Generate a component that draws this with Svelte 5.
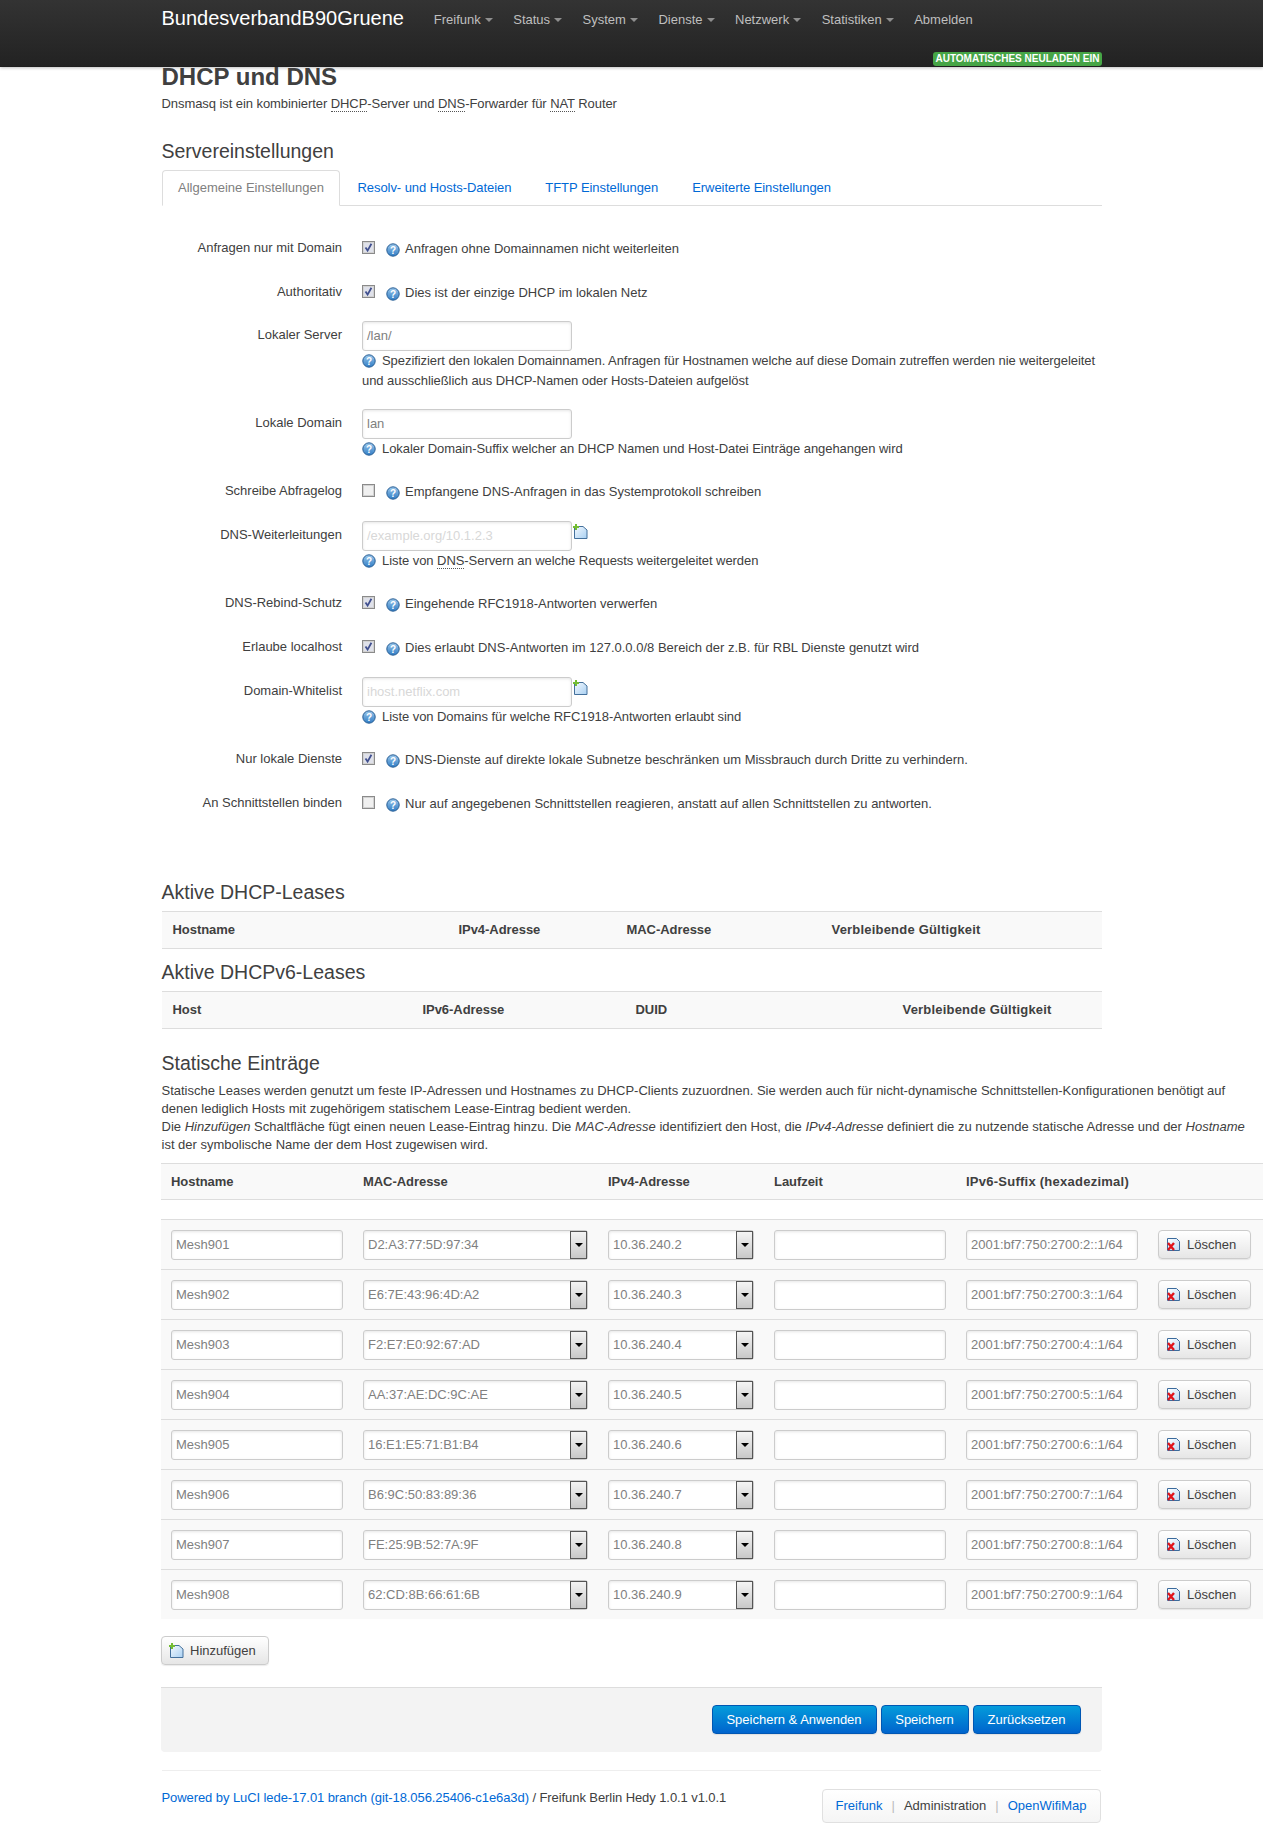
<script>
    const nav = ['Freifunk', 'Status', 'System', 'Dienste', 'Netzwerk', 'Statistiken'];
    const leases = [
        { mac: 'D2:A3:77:5D:97:34' },
        { mac: 'E6:7E:43:96:4D:A2' },
        { mac: 'F2:E7:E0:92:67:AD' },
        { mac: 'AA:37:AE:DC:9C:AE' },
        { mac: '16:E1:E5:71:B1:B4' },
        { mac: 'B6:9C:50:83:89:36' },
        { mac: 'FE:25:9B:52:7A:9F' },
        { mac: '62:CD:8B:66:61:6B' }
    ];
</script>

{#snippet help()}
    <svg class="help" width="14" height="14" viewBox="0 0 14 14">
        <defs>
            <linearGradient id="hg" x1="0" y1="0" x2="0" y2="1">
                <stop offset="0" stop-color="#9cc8ec" />
                <stop offset="1" stop-color="#2f7cc4" />
            </linearGradient>
        </defs>
        <circle cx="7" cy="7" r="6.2" fill="url(#hg)" stroke="#2a5f95" stroke-width="1" />
        <text x="7" y="10.5" text-anchor="middle" class="q">?</text>
    </svg>
{/snippet}

{#snippet check(on)}
    <svg class="check" width="13" height="13" viewBox="0 0 13 13">
        <rect x="0.5" y="0.5" width="12" height="12" fill={on ? '#dfe1ea' : '#f0f0f0'} stroke="#8a8a8a" />
        <rect x="1.5" y="1.5" width="10" height="10" fill="none" stroke="#d2d2d2" />
        {#if on}
            <path d="M3.5 6.5 L5.6 9.6 L9.4 2.8" fill="none" stroke="#41508f" stroke-width="1.8" />
        {/if}
    </svg>
{/snippet}

{#snippet addIcon()}
    <svg class="icon" width="15" height="15" viewBox="0 0 15 15">
        <defs>
            <linearGradient id="ag" x1="0" y1="0" x2="1" y2="1">
                <stop offset="0" stop-color="#f4f9fe" />
                <stop offset="1" stop-color="#a9d0f2" />
            </linearGradient>
        </defs>
        <path d="M1.5 2.5 H10 L14 6 V14.5 H1.5 Z" fill="url(#ag)" stroke="#44709c" />
        <path d="M3 0 V6 M0 3 H6" stroke="#74bd33" stroke-width="2" />
    </svg>
{/snippet}

{#snippet delIcon()}
    <svg class="icon" width="15" height="15" viewBox="0 0 15 15">
        <defs>
            <linearGradient id="dg" x1="0" y1="0" x2="1" y2="1">
                <stop offset="0" stop-color="#ffffff" />
                <stop offset="1" stop-color="#bcd9f4" />
            </linearGradient>
        </defs>
        <path d="M1.5 1.5 H10.5 L13.5 4.5 V13.5 H1.5 Z" fill="url(#dg)" stroke="#3a6a9c" />
        <path d="M2 6 L8 13 M8 6 L2 13" stroke="#e0141c" stroke-width="2.4" />
    </svg>
{/snippet}

<div class="page">
    <header class="navbar">
        <div class="bar-inner">
            <span class="brand">BundesverbandB90Gruene</span>
            <nav class="menu">
                {#each nav as item}
                    <span class="menu-item">{item}<i class="caret"></i></span>
                {/each}
                <span class="menu-item">Abmelden</span>
            </nav>
            <span class="badge">AUTOMATISCHES NEULADEN EIN</span>
        </div>
    </header>

    <main class="container">
        <h2 class="title">DHCP und DNS</h2>
        <p class="intro">Dnsmasq ist ein kombinierter <abbr>DHCP</abbr>-Server und <abbr>DNS</abbr>-Forwarder für <abbr>NAT</abbr> Router</p>

        <h3 class="server-head">Servereinstellungen</h3>
        <ul class="tabs">
            <li class="tab active">Allgemeine Einstellungen</li>
            <li class="tab">Resolv- und Hosts-Dateien</li>
            <li class="tab">TFTP Einstellungen</li>
            <li class="tab">Erweiterte Einstellungen</li>
        </ul>

        <section class="form">
            <div class="row first">
                <div class="lbl">Anfragen nur mit Domain</div>
                <div class="ctl">{@render check(true)}{@render help()}<span>Anfragen ohne Domainnamen nicht weiterleiten</span></div>
            </div>
            <div class="row first">
                <div class="lbl">Authoritativ</div>
                <div class="ctl">{@render check(true)}{@render help()}<span>Dies ist der einzige DHCP im lokalen Netz</span></div>
            </div>
            <div class="row tall">
                <div class="lbl">Lokaler Server</div>
                <div class="stack">
                    <div class="field wide">/lan/</div>
                    <div class="desc">{@render help()}Spezifiziert den lokalen Domainnamen. Anfragen für Hostnamen welche auf diese Domain zutreffen werden nie weitergeleitet und ausschließlich aus DHCP-Namen oder Hosts-Dateien aufgelöst</div>
                </div>
            </div>
            <div class="row tall">
                <div class="lbl">Lokale Domain</div>
                <div class="stack">
                    <div class="field wide">lan</div>
                    <div class="desc">{@render help()}Lokaler Domain-Suffix welcher an DHCP Namen und Host-Datei Einträge angehangen wird</div>
                </div>
            </div>
            <div class="row">
                <div class="lbl">Schreibe Abfragelog</div>
                <div class="ctl">{@render check(false)}{@render help()}<span>Empfangene DNS-Anfragen in das Systemprotokoll schreiben</span></div>
            </div>
            <div class="row tall">
                <div class="lbl">DNS-Weiterleitungen</div>
                <div class="stack">
                    <div class="with-add"><div class="field wide ph">/example.org/10.1.2.3</div>{@render addIcon()}</div>
                    <div class="desc">{@render help()}Liste von <abbr>DNS</abbr>-Servern an welche Requests weitergeleitet werden</div>
                </div>
            </div>
            <div class="row">
                <div class="lbl">DNS-Rebind-Schutz</div>
                <div class="ctl">{@render check(true)}{@render help()}<span>Eingehende RFC1918-Antworten verwerfen</span></div>
            </div>
            <div class="row">
                <div class="lbl">Erlaube localhost</div>
                <div class="ctl">{@render check(true)}{@render help()}<span>Dies erlaubt DNS-Antworten im 127.0.0.0/8 Bereich der z.B. für RBL Dienste genutzt wird</span></div>
            </div>
            <div class="row tall">
                <div class="lbl">Domain-Whitelist</div>
                <div class="stack">
                    <div class="with-add"><div class="field wide ph">ihost.netflix.com</div>{@render addIcon()}</div>
                    <div class="desc">{@render help()}Liste von Domains für welche RFC1918-Antworten erlaubt sind</div>
                </div>
            </div>
            <div class="row">
                <div class="lbl">Nur lokale Dienste</div>
                <div class="ctl">{@render check(true)}{@render help()}<span>DNS-Dienste auf direkte lokale Subnetze beschränken um Missbrauch durch Dritte zu verhindern.</span></div>
            </div>
            <div class="row">
                <div class="lbl">An Schnittstellen binden</div>
                <div class="ctl">{@render check(false)}{@render help()}<span>Nur auf angegebenen Schnittstellen reagieren, anstatt auf allen Schnittstellen zu antworten.</span></div>
            </div>
        </section>

        <h3 class="lease-head">Aktive DHCP-Leases</h3>
        <div class="thead v4">
            <span>Hostname</span><span>IPv4-Adresse</span><span>MAC-Adresse</span><span class="long">Verbleibende Gültigkeit</span>
        </div>
        <h3 class="lease6-head">Aktive DHCPv6-Leases</h3>
        <div class="thead v6">
            <span>Host</span><span>IPv6-Adresse</span><span>DUID</span><span class="long">Verbleibende Gültigkeit</span>
        </div>

        <h3 class="static-head">Statische Einträge</h3>
        <p class="static-text">Statische Leases werden genutzt um feste IP-Adressen und Hostnames zu DHCP-Clients zuzuordnen. Sie werden auch für nicht-dynamische Schnittstellen-Konfigurationen benötigt auf denen lediglich Hosts mit zugehörigem statischem Lease-Eintrag bedient werden.<br />Die <em>Hinzufügen</em> Schaltfläche fügt einen neuen Lease-Eintrag hinzu. Die <em>MAC-Adresse</em> identifiziert den Host, die <em>IPv4-Adresse</em> definiert die zu nutzende statische Adresse und der <em>Hostname</em> ist der symbolische Name der dem Host zugewisen wird.</p>

        <table class="static">
            <colgroup>
                <col style="width:192px" /><col style="width:245px" /><col style="width:166px" /><col style="width:192px" /><col style="width:192px" /><col style="width:115px" />
            </colgroup>
            <thead>
                <tr>
                    <th>Hostname</th><th>MAC-Adresse</th><th>IPv4-Adresse</th><th>Laufzeit</th><th colspan="2" class="long">IPv6-Suffix (hexadezimal)</th>
                </tr>
            </thead>
            <tbody>
                <tr class="spacer"><td colspan="6"></td></tr>
                {#each leases as lease, i}
                    <tr class="entry">
                        <td><div class="field">Mesh90{i + 1}</div></td>
                        <td><div class="combo"><span>{lease.mac}</span><i class="drop"><b></b></i></div></td>
                        <td><div class="combo"><span>10.36.240.{i + 2}</span><i class="drop"><b></b></i></div></td>
                        <td><div class="field"></div></td>
                        <td><div class="field">2001:bf7:750:2700:{i + 2}::1/64</div></td>
                        <td><button class="btn del">{@render delIcon()}Löschen</button></td>
                    </tr>
                {/each}
            </tbody>
        </table>

        <button class="btn add">{@render addIcon()}Hinzufügen</button>

        <div class="actions">
            <button class="btn primary apply">Speichern &amp; Anwenden</button>
            <button class="btn primary save">Speichern</button>
            <button class="btn primary reset">Zurücksetzen</button>
        </div>

        <footer class="foot">
            <p class="powered"><a href="#top">Powered by LuCI lede-17.01 branch (git-18.056.25406-c1e6a3d)</a> / Freifunk Berlin Hedy 1.0.1 v1.0.1</p>
            <div class="links">
                <a href="#top">Freifunk</a><i>|</i><span>Administration</span><i>|</i><a href="#top">OpenWifiMap</a>
            </div>
        </footer>
    </main>
</div>

<style>
    :global(body) {
        margin: 0;
        background: #fff;
    }

    .page {
        width: 1263px;
        height: 1832px;
        overflow: hidden;
        font-family: "Liberation Sans", Arial, sans-serif;
        font-size: 13px;
        line-height: 18px;
        color: #404040;
    }

    .navbar {
        height: 67px;
        background: linear-gradient(#333333, #222222);
        box-shadow: 0 1px 3px rgba(0, 0, 0, 0.25), 0 -1px 0 rgba(0, 0, 0, 0.1) inset;
    }

    .bar-inner {
        position: relative;
        width: 940px;
        margin-left: 161.5px;
        display: flex;
        align-items: flex-start;
    }

    .brand {
        font-size: 20px;
        line-height: 36px;
        color: #fff;
        width: 262px;
        flex: none;
    }

    .menu {
        display: flex;
    }

    .menu-item {
        color: #bfbfbf;
        line-height: 39px;
        padding: 0 10.25px;
        white-space: nowrap;
    }

    .caret {
        display: inline-block;
        margin-left: 4px;
        vertical-align: 2px;
        border-top: 4px solid #8f8f8f;
        border-left: 4px solid transparent;
        border-right: 4px solid transparent;
    }

    .badge {
        position: absolute;
        top: 52px;
        right: -0.5px;
        height: 14px;
        width: 169px;
        background: #46a546;
        border-radius: 3px;
        color: #fff;
        font-size: 10px;
        font-weight: bold;
        line-height: 14px;
        text-align: center;
        white-space: nowrap;
    }

    .container {
        width: 940px;
        margin-left: 161.5px;
    }

    .title {
        margin: 0;
        font-size: 24px;
        line-height: 20px;
        font-weight: bold;
        color: #404040;
    }

    .intro {
        margin: 8px 0 0;
        line-height: 18px;
        letter-spacing: -0.07px;
    }

    abbr {
        border-bottom: 1px dotted #555;
    }

    h3 {
        margin: 0;
        font-size: 19.5px;
        font-weight: normal;
        line-height: 24px;
        color: #404040;
    }

    .server-head {
        margin-top: 26px;
    }

    .tabs {
        list-style: none;
        margin: 7px 0 0;
        padding: 0;
        display: flex;
        height: 35px;
        border-bottom: 1px solid #ddd;
    }

    .tab {
        color: #0069d6;
        padding: 0 17px;
        line-height: 35px;
        white-space: nowrap;
        letter-spacing: -0.06px;
    }

    .tab.active {
        color: #808080;
        background: #fff;
        border: 1px solid #ddd;
        border-bottom: 1px solid #fff;
        border-radius: 4px 4px 0 0;
        line-height: 34px;
        padding: 0 15.5px;
        box-sizing: border-box;
        height: 36px;
        letter-spacing: 0;
    }

    .form {
        padding-top: 28px;
    }

    .row {
        display: flex;
        height: 26px;
        margin-bottom: 18px;
    }

    .row.first {
        height: 25.5px;
    }

    .row.tall {
        height: auto;
    }

    .lbl {
        width: 180.5px;
        flex: none;
        text-align: right;
        line-height: 28px;
        white-space: nowrap;
    }

    .ctl {
        margin-left: 20px;
        display: flex;
        align-items: flex-start;
        line-height: 30px;
        white-space: nowrap;
    }

    .check {
        margin-top: 7px;
        margin-right: 11px;
        flex: none;
    }

    .ctl .help {
        margin: 9px 5px 0 0;
        flex: none;
    }

    .help {
        display: inline-block;
    }

    .q {
        font-size: 10px;
        font-weight: bold;
        fill: #fff;
    }

    .stack {
        margin-left: 20px;
        width: 739.5px;
    }

    .desc {
        line-height: 20px;
        letter-spacing: -0.06px;
    }

    .desc .help {
        vertical-align: -3px;
        margin-right: 6px;
    }

    .field {
        box-sizing: border-box;
        height: 30px;
        line-height: 28px;
        padding: 0 4px;
        background: #fff;
        border: 1px solid #ccc;
        border-radius: 3px;
        box-shadow: inset 0 1px 3px rgba(0, 0, 0, 0.1);
        color: #808080;
        white-space: nowrap;
        overflow: hidden;
    }

    .field.wide {
        width: 210px;
    }

    .field.ph {
        color: #d8d8d8;
    }

    .with-add {
        display: flex;
        align-items: flex-start;
    }

    .with-add .icon {
        margin: 3px 0 0 1px;
    }

    .lease-head {
        margin-top: 65px;
    }

    .lease6-head {
        margin-top: 11px;
    }

    .thead {
        box-sizing: border-box;
        height: 38px;
        margin-top: 7px;
        display: grid;
        align-items: center;
        padding-left: 11px;
        background: #f9f9f9;
        border-top: 1px solid #ddd;
        border-bottom: 1px solid #ddd;
        font-weight: bold;
        letter-spacing: -0.05px;
    }

    .thead .long {
        letter-spacing: 0.2px;
    }

    .thead.v4 {
        grid-template-columns: 286px 168px 205px 1fr;
    }

    .thead.v6 {
        grid-template-columns: 250px 213px 267px 1fr;
    }

    .static-head {
        margin-top: 22px;
    }

    .static-text {
        width: 1095px;
        margin: 7px 0 0;
        line-height: 18px;
    }

    .static {
        margin-top: 9px;
        margin-left: -0.5px;
        width: 1102px;
        border-collapse: collapse;
        table-layout: fixed;
    }

    .static th {
        height: 35px;
        padding: 0 10px;
        text-align: left;
        font-weight: bold;
        background: #f9f9f9;
        border-top: 1px solid #ddd;
        border-bottom: 1px solid #ddd;
        letter-spacing: -0.05px;
    }

    .static th.long {
        letter-spacing: 0.25px;
    }

    .spacer td {
        height: 19px;
        padding: 0;
    }

    .entry td {
        height: 49px;
        padding: 0 10px;
        background: #f9f9f9;
        border-top: 1px solid #ddd;
    }

    .entry .field {
        width: 100%;
    }

    .combo {
        position: relative;
        box-sizing: border-box;
        height: 30px;
        line-height: 28px;
        padding: 0 4px;
        background: #fff;
        border: 1px solid #ccc;
        border-radius: 3px;
        box-shadow: inset 0 1px 3px rgba(0, 0, 0, 0.1);
        color: #808080;
    }

    .drop {
        position: absolute;
        top: 0;
        right: 0;
        box-sizing: border-box;
        width: 17px;
        height: 28px;
        border: 1px solid #555;
        background: linear-gradient(#f4f4f4, #c8c8c8);
        display: flex;
        align-items: center;
        justify-content: center;
    }

    .drop b {
        border-top: 4px solid #000;
        border-left: 4px solid transparent;
        border-right: 4px solid transparent;
    }

    .btn {
        box-sizing: border-box;
        font-family: inherit;
        font-size: 13px;
        color: #404040;
        height: 29px;
        padding: 0;
        display: inline-flex;
        align-items: center;
        background: linear-gradient(#ffffff, #e6e6e6);
        border: 1px solid #ccc;
        border-radius: 4px;
        box-shadow: 0 1px 1px rgba(0, 0, 0, 0.08);
    }

    .btn .icon {
        margin-right: 6px;
    }

    .del {
        width: 93px;
        padding-left: 7px;
    }

    .add {
        display: flex;
        margin: 17px 0 0 -0.5px;
        width: 108px;
        padding-left: 7px;
    }

    .actions {
        box-sizing: border-box;
        margin: 22px 0 0 -0.5px;
        height: 65px;
        padding: 17px 21px 0 0;
        display: flex;
        justify-content: flex-end;
        gap: 4px;
        background: #f3f3f3;
        border-top: 1px solid #ddd;
        border-radius: 0 0 4px 4px;
    }

    .primary {
        color: #fff;
        justify-content: center;
        background: linear-gradient(#049cdb, #0064cd);
        border: 1px solid #0057b3;
    }

    .apply {
        width: 165px;
    }

    .save {
        width: 88px;
    }

    .reset {
        width: 108px;
    }

    .foot {
        margin-top: 18px;
        margin-right: 1px;
        padding-top: 18px;
        border-top: 1px solid #eee;
        display: flex;
        justify-content: space-between;
        align-items: flex-start;
    }

    .powered {
        margin: 0;
        letter-spacing: -0.08px;
    }

    a {
        color: #0069d6;
        text-decoration: none;
    }

    .links {
        box-sizing: border-box;
        width: 279px;
        height: 34px;
        display: flex;
        align-items: center;
        justify-content: center;
        background: linear-gradient(#ffffff, #f5f5f5);
        border: 1px solid #e0e0e0;
        border-radius: 4px;
    }

    .links i {
        font-style: normal;
        color: #bbb;
        margin: 0 9px;
    }
</style>
